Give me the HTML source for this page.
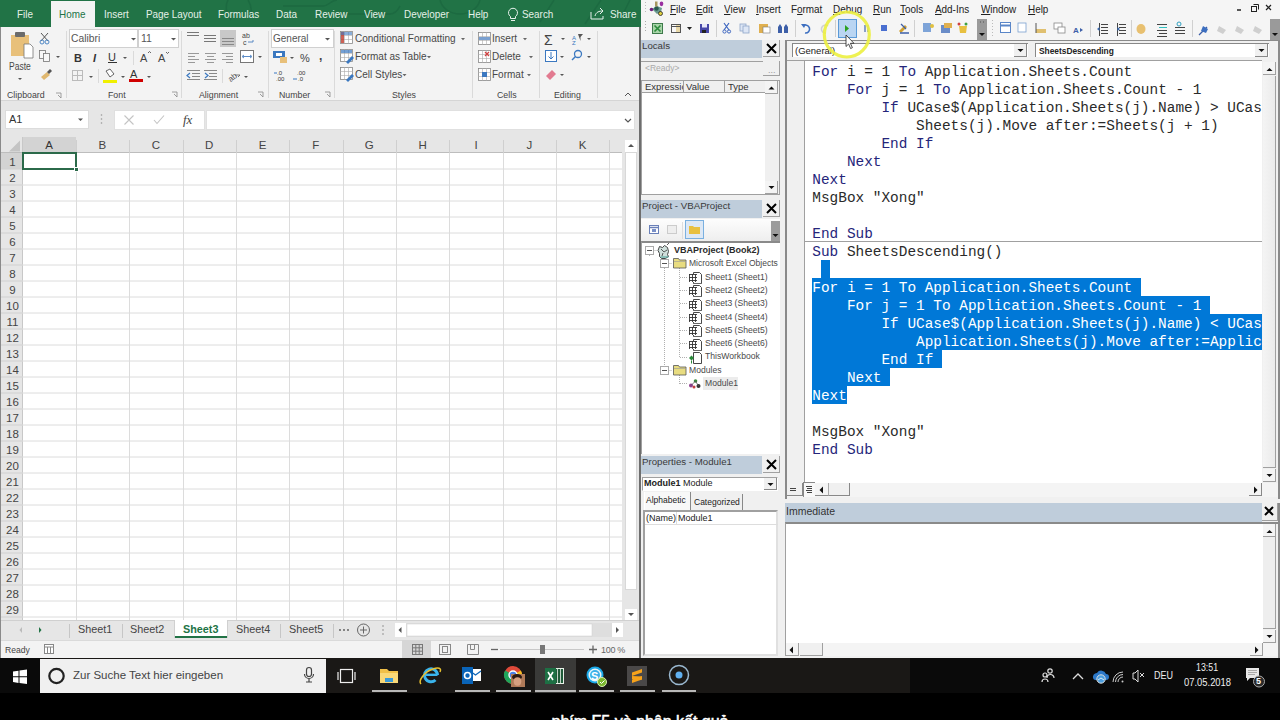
<!DOCTYPE html>
<html><head><meta charset="utf-8">
<style>
*{margin:0;padding:0;box-sizing:border-box}
body{width:1280px;height:720px;overflow:hidden;background:#000;position:relative;font-family:"Liberation Sans",sans-serif;color:#222}
.a{position:absolute}
.t{position:absolute;white-space:nowrap;line-height:1}
/* excel */
#xl{left:0;top:0;width:641px;height:658px;background:#e6e6e6}
.tab{position:absolute;top:8px;font-size:11.5px;color:#e4f1e8;white-space:nowrap;line-height:12px;transform:scaleX(0.86);transform-origin:0 0}
.rl{position:absolute;top:89.5px;font-size:8.8px;color:#444;white-space:nowrap;line-height:10px}
.rsep{position:absolute;top:31px;width:1px;height:67px;background:#dadada}
.rt{position:absolute;font-size:10px;color:#484848;white-space:nowrap;line-height:11px}
.ch{position:absolute;top:137px;height:16px;font-size:11px;color:#444;text-align:center;line-height:16px;border-right:1px solid #c8c8c8}
.rh{position:absolute;left:0;width:22px;height:16px;font-size:11px;color:#444;text-align:center;line-height:16px;border-bottom:1px solid #d8d8d8}
/* vba */
#vb{left:641px;top:0;width:639px;height:658px;background:#f0f0f0}
.mn{position:absolute;top:3px;font-size:11px;color:#222;white-space:nowrap;line-height:12px;transform:scaleX(0.9);transform-origin:0 0}
.mn u{text-decoration:underline;text-underline-offset:1px}
.tb{position:absolute;left:641px;width:121px;height:18px;background:#bfcddb;font-size:9.7px;color:#3a3a3a;line-height:12.5px;padding-left:1px;white-space:nowrap}
.xb{position:absolute;left:763px;width:17px;height:17px;background:#f0f0f0;border-right:1px solid #a0a0a0;border-bottom:1px solid #a0a0a0}
.code{position:absolute;left:812.3px;font-family:"Liberation Mono",monospace;font-size:14.41px;line-height:18px;white-space:pre;color:#2a2a2a}
.k{color:#25257a}
.sel{background:#0078d7;color:#fff}
.tr{position:absolute;font-size:9.5px;color:#4a4a4a;white-space:nowrap;line-height:10px}
</style></head><body>

<!-- ================= EXCEL ================= -->
<div id="xl" class="a">
  <div class="a" style="left:0;top:0;width:641px;height:27px;background:#217346"></div>
  <div class="a" style="left:51px;top:1px;width:44px;height:27px;background:#f3f3f3"></div>
  <div class="a" style="left:0;top:27px;width:641px;height:74px;background:#f3f3f3;border-bottom:1px solid #d5d5d5"></div>

  <!-- ribbon icons: clipboard -->
  <svg class="a" style="left:0;top:27px" width="641" height="74" viewBox="0 27 641 74">
    <!-- paste -->
    <rect x="11" y="35" width="18" height="21" fill="#e8c07a"/>
    <rect x="15" y="32" width="10" height="5" rx="1" fill="#6b6b6b"/>
    <path d="M24 44h6l3 3v11h-9z" fill="#fff" stroke="#777" stroke-width="0.8"/>
    <!-- cut -->
    <path d="M41 33l7 8M48 33l-7 8" stroke="#555" stroke-width="1"/>
    <circle cx="42" cy="42" r="2" fill="none" stroke="#4f88c6" stroke-width="1"/>
    <circle cx="47" cy="42" r="2" fill="none" stroke="#4f88c6" stroke-width="1"/>
    <!-- copy -->
    <rect x="39.5" y="50.5" width="6" height="8" fill="#f8f8f8" stroke="#777" stroke-width="0.8"/>
    <rect x="43.5" y="53.5" width="6" height="8" fill="#f8f8f8" stroke="#777" stroke-width="0.8"/>
    <path d="M56 56h4l-2 2z" fill="#555"/>
    <!-- format painter -->
    <path d="M41 77l6-5 3 3-6 5z" fill="#e0b870"/>
    <path d="M47 72l3-3 2 2-3 3z" fill="#555"/>
    <path d="M18 78h4l-2 2z" fill="#555"/>
    <path d="M56 93h5v5" fill="none" stroke="#888" stroke-width="0.8"/><path d="M58 95l3 3" stroke="#888" stroke-width="0.8"/>
    <!-- font boxes -->
    <rect x="69.5" y="29.5" width="68" height="18" fill="#fff" stroke="#d0d0d0"/>
    <rect x="138.5" y="29.5" width="40" height="18" fill="#fff" stroke="#d0d0d0"/>
    <path d="M131 38h5l-2.5 2.5z" fill="#555"/>
    <path d="M171 38h5l-2.5 2.5z" fill="#555"/>
    <text x="71" y="42" font-size="10.3" fill="#555" font-family="Liberation Sans">Calibri</text>
    <text x="141" y="42" font-size="10.5" fill="#555" font-family="Liberation Sans">11</text>
    <text x="74" y="62" font-size="11" font-weight="bold" fill="#333" font-family="Liberation Sans">B</text>
    <text x="93" y="62" font-size="11" font-style="italic" font-weight="bold" fill="#333" font-family="Liberation Sans">I</text>
    <text x="108" y="61" font-size="11" fill="#333" font-family="Liberation Sans">U</text>
    <rect x="108" y="62" width="9" height="1" fill="#333"/>
    <path d="M123 57h4l-2 2z" fill="#555"/>
    <rect x="133" y="51" width="1" height="14" fill="#dadada"/>
    <text x="140" y="62" font-size="11" fill="#444" font-family="Liberation Sans">A</text>
    <path d="M148 53l1.5 -1.5 1.5 1.5" fill="none" stroke="#444" stroke-width="0.8"/>
    <text x="158" y="62" font-size="11" fill="#444" font-family="Liberation Sans">A</text>
    <path d="M166 52l1.5 1.5 1.5 -1.5" fill="none" stroke="#444" stroke-width="0.8"/>
    <!-- borders -->
    <rect x="72.5" y="70.5" width="10" height="10" fill="none" stroke="#bbb"/>
    <path d="M77.5 70v11M72 75.5h11" stroke="#bbb"/>
    <path d="M89 76h4l-2 2z" fill="#555"/>
    <rect x="98" y="69" width="1" height="14" fill="#dadada"/>
    <!-- fill color -->
    <path d="M106 71l4 -2 4 5 -4 3z" fill="#fff" stroke="#555" stroke-width="0.9"/>
    <rect x="103" y="80" width="14" height="3" fill="#f0f000"/>
    <path d="M121 76h4l-2 2z" fill="#555"/>
    <text x="130" y="78" font-size="11" fill="#333" font-family="Liberation Sans">A</text>
    <rect x="129" y="79" width="14" height="3" fill="#d00000"/>
    <path d="M147 76h4l-2 2z" fill="#555"/>
    <path d="M172 92h5v5" fill="none" stroke="#888" stroke-width="0.8"/><path d="M174 94l3 3" stroke="#888" stroke-width="0.8"/>
    <!-- alignment -->
    <path d="M187 32.5h12M187 35.5h12" stroke="#777" stroke-width="1"/>
    <path d="M204 35.5h12M204 38.5h12M204 41.5h12" stroke="#777" stroke-width="1"/>
    <rect x="220" y="30" width="16" height="17" fill="#c8c8c8"/>
    <path d="M222 38.5h12M222 41.5h12M222 44.5h12" stroke="#888" stroke-width="1"/>
    <text x="242" y="38" font-size="7" fill="#444" font-family="Liberation Sans">ab</text>
    <text x="243" y="45" font-size="7" fill="#444" font-family="Liberation Sans">c</text>
    <path d="M248 42h5v-2" fill="none" stroke="#4a7fc0" stroke-width="0.9"/>
    <path d="M188 53.5h11M188 56.5h7M188 59.5h11M188 62.5h7" stroke="#999" stroke-width="1"/>
    <path d="M205 53.5h11M207 56.5h7M205 59.5h11M207 62.5h7" stroke="#999" stroke-width="1"/>
    <path d="M222 53.5h11M226 56.5h7M222 59.5h11M226 62.5h7" stroke="#999" stroke-width="1"/>
    <rect x="240.5" y="50.5" width="13" height="12" fill="#fff" stroke="#777"/>
    <path d="M243 56.5h8M244 55l-2 1.5 2 1.5M250 55l2 1.5-2 1.5" fill="none" stroke="#4a7fc0" stroke-width="0.9"/>
    <path d="M258 56h4l-2 2z" fill="#555"/>
    <path d="M187 70.5h13M192 73.5h8M192 76.5h8M187 79.5h13" stroke="#888" stroke-width="1"/>
    <path d="M190 73l-3 2.5 3 2.5" fill="none" stroke="#3b78c0" stroke-width="1.2"/>
    <path d="M204 70.5h13M209 73.5h8M209 76.5h8M204 79.5h13" stroke="#888" stroke-width="1"/>
    <path d="M205 73l3 2.5-3 2.5" fill="none" stroke="#3b78c0" stroke-width="1.2"/>
    <rect x="222" y="69" width="1" height="14" fill="#dadada"/>
    <text x="227" y="80" font-size="8" fill="#555" font-family="Liberation Sans" transform="rotate(-40 232 76)">ab</text>
    <path d="M235 75h5l-2 2" fill="none" stroke="#555" stroke-width="0.8"/>
    <path d="M244 76h4l-2 2z" fill="#555"/>
    <path d="M258 92h5v5" fill="none" stroke="#888" stroke-width="0.8"/><path d="M260 94l3 3" stroke="#888" stroke-width="0.8"/>
    <!-- number -->
    <rect x="271.5" y="29.5" width="62" height="18" fill="#fff" stroke="#d0d0d0"/>
    <text x="273" y="42" font-size="10" fill="#555" font-family="Liberation Sans">General</text>
    <path d="M325 38h5l-2.5 2.5z" fill="#555"/>
    <rect x="273" y="51" width="12" height="7" fill="#3b78c0"/>
    <rect x="276" y="53" width="6" height="3" fill="#fff"/>
    <rect x="280" y="57" width="7" height="6" fill="#e8c07a"/>
    <path d="M290 57h4l-2 2z" fill="#555"/>
    <text x="300" y="62" font-size="11" fill="#444" font-family="Liberation Sans">%</text>
    <text x="319" y="60" font-size="12" font-weight="bold" fill="#444" font-family="Liberation Sans">,</text>
    <text x="277" y="75" font-size="6" fill="#333" font-family="Liberation Sans">.0</text>
    <text x="276" y="81" font-size="6" fill="#333" font-family="Liberation Sans">.00</text>
    <path d="M274 73h3" stroke="#3b78c0" stroke-width="1"/>
    <text x="297" y="75" font-size="6" fill="#333" font-family="Liberation Sans">.00</text>
    <text x="298" y="81" font-size="6" fill="#333" font-family="Liberation Sans">.0</text>
    <path d="M293 79h4" stroke="#3b78c0" stroke-width="1"/>
    <path d="M325 92h5v5" fill="none" stroke="#888" stroke-width="0.8"/><path d="M327 94l3 3" stroke="#888" stroke-width="0.8"/>
    <!-- styles icons -->
    <g stroke="#888" stroke-width="0.8" fill="#fff">
      <rect x="340.5" y="31.5" width="12" height="12"/><rect x="340.5" y="49.5" width="12" height="12"/><rect x="340.5" y="67.5" width="12" height="12"/>
      <rect x="478.5" y="32.5" width="12" height="12"/><rect x="478.5" y="50.5" width="12" height="12"/><rect x="478.5" y="68.5" width="12" height="12"/>
    </g>
    <g stroke="#aaa" stroke-width="0.6">
      <path d="M340 35.5h13M340 39.5h13M344.5 31v13M348.5 31v13"/>
      <path d="M340 53.5h13M340 57.5h13M344.5 49v13M348.5 49v13"/>
      <path d="M340 71.5h13M340 75.5h13M344.5 67v13M348.5 67v13"/>
      <path d="M478 36.5h13M478 40.5h13M482.5 32v13M486.5 32v13"/>
      <path d="M478 54.5h13M478 58.5h13M482.5 50v13M486.5 50v13"/>
      <path d="M478 72.5h13M478 76.5h13M482.5 68v13M486.5 68v13"/>
    </g>
    <rect x="341" y="32" width="3" height="11" fill="#c0392b" opacity="0.8"/><rect x="341" y="32" width="11" height="3" fill="#3b78c0" opacity="0.6"/>
    <rect x="341" y="50" width="11" height="3" fill="#3b78c0" opacity="0.7"/><path d="M346 62l6-6 2 2-6 6z" fill="#3b78c0"/>
    <path d="M346 80l6-6 2 2-6 6z" fill="#3b78c0"/>
    <rect x="479" y="37" width="11" height="3" fill="#7aa0d0"/>
    <path d="M485 52l4 4M489 52l-4 4" stroke="#d04040" stroke-width="1.3"/>
    <rect x="482" y="72" width="5" height="5" fill="#3b78c0"/>
    <g fill="#666">
      <path d="M461 38h4l-2 2.2z"/><path d="M427 56h4l-2 2.2z"/><path d="M402.5 74h4l-2 2.2z"/>
      <path d="M523 38h4l-2 2.2z"/><path d="M529 56h4l-2 2.2z"/><path d="M527 74h4l-2 2.2z"/>
    </g>
    <!-- editing -->
    <text x="544" y="45" font-size="14" fill="#444" font-family="Liberation Sans">Σ</text>
    <path d="M561 38h4l-2 2z" fill="#555"/>
    <text x="572" y="40" font-size="6" fill="#3b78c0" font-family="Liberation Sans">A</text>
    <text x="572" y="45" font-size="6" fill="#3b78c0" font-family="Liberation Sans">Z</text>
    <path d="M578 34h5l-2.5 3v4z" fill="#555"/>
    <path d="M587 38h4l-2 2z" fill="#555"/>
    <rect x="545.5" y="50.5" width="11" height="11" fill="#fff" stroke="#3b78c0"/>
    <path d="M551 52v7M548.5 56.5l2.5 2.5 2.5-2.5" fill="none" stroke="#3b78c0" stroke-width="1"/>
    <path d="M560 56h4l-2 2z" fill="#555"/>
    <circle cx="578" cy="54" r="3.5" fill="none" stroke="#3b78c0" stroke-width="1.3"/>
    <path d="M575.5 56.5l-3.5 3.5" stroke="#3b78c0" stroke-width="1.5"/>
    <path d="M587 56h4l-2 2z" fill="#555"/>
    <path d="M546 76l6-6 4 4-6 6z" fill="#e27a90"/>
    <path d="M560 74h4l-2 2z" fill="#555"/>
    <path d="M625 96l3-3 3 3" fill="none" stroke="#555" stroke-width="1"/>
  </svg>
  <div class="rsep" style="left:66px"></div>
  <div class="rsep" style="left:181px"></div>
  <div class="rsep" style="left:268px"></div>
  <div class="rsep" style="left:334px"></div>
  <div class="rsep" style="left:472px"></div>
  <div class="rsep" style="left:539px"></div>
  <div class="rsep" style="left:597px"></div>
  <div class="rt" style="left:9px;top:61px;font-size:10px;transform:scaleX(0.85);transform-origin:0 0">Paste</div>
  <div class="rl" style="left:7px">Clipboard</div>
  <div class="rl" style="left:108px">Font</div>
  <div class="rl" style="left:199px">Alignment</div>
  <div class="rl" style="left:279px">Number</div>
  <div class="rl" style="left:392px">Styles</div>
  <div class="rl" style="left:497px">Cells</div>
  <div class="rl" style="left:554px">Editing</div>
  <div class="rt" style="left:355px;top:33px">Conditional Formatting</div>
  <div class="rt" style="left:355px;top:51px">Format as Table</div>
  <div class="rt" style="left:355px;top:69px">Cell Styles</div>
  <div class="rt" style="left:492px;top:33px">Insert</div>
  <div class="rt" style="left:492px;top:51px">Delete</div>
  <div class="rt" style="left:492px;top:69px">Format</div>
<svg class="a" style="left:0;top:0" width="641" height="27" viewBox="0 0 641 27"><g fill="none" stroke="#1c6840" stroke-width="1.5" opacity="0.8">
      <path d="M228 0c-3 6-2 14 3 20M248 0c4 6 4 12 2 18"/>
      <path d="M283 6h40c6 0 8-6 14-6M330 14h60c5 0 8-4 10-8"/>
      <path d="M440 0c2 8 10 14 20 14s18-6 20-14"/>
      <path d="M540 22l14-22M585 24l16-24M620 20l10-20"/>
    </g>
    
    <path d="M510.5 18.5v-2a4.5 4.5 0 1 1 5 0v2z" fill="none" stroke="#e8f2ec" stroke-width="1"/><path d="M511 20.5h4" stroke="#e8f2ec" stroke-width="1"/>
    <path d="M591 12v7h12v-3" fill="none" stroke="#e8f2ec" stroke-width="1"/><path d="M595 16c1-4 4-5 8-5M600 8l3 3-3 3" fill="none" stroke="#e8f2ec" stroke-width="1"/>
    </svg>
  <div class="tab" style="left:17px">File</div>
  <div class="tab" style="left:59px;color:#217346">Home</div>
  <div class="tab" style="left:104px">Insert</div>
  <div class="tab" style="left:146px">Page Layout</div>
  <div class="tab" style="left:218px">Formulas</div>
  <div class="tab" style="left:276px">Data</div>
  <div class="tab" style="left:315px">Review</div>
  <div class="tab" style="left:364px">View</div>
  <div class="tab" style="left:404px">Developer</div>
  <div class="tab" style="left:468px">Help</div>
  <div class="tab" style="left:522px">Search</div>
  <div class="tab" style="left:610px">Share</div>

  <!-- formula bar -->
  <div class="a" style="left:5px;top:110px;width:84px;height:19px;background:#fff;border:1px solid #dcdcdc"></div>
  <div class="rt" style="left:9px;top:114px;font-size:11px;color:#333">A1</div>
  <svg class="a" style="left:0;top:101px" width="641" height="36" viewBox="0 101 641 36">
    <path d="M78 118.5h5l-2.5 2.5z" fill="#555"/>
    <circle cx="101.5" cy="115" r="0.8" fill="#999"/><circle cx="101.5" cy="119" r="0.8" fill="#999"/><circle cx="101.5" cy="123" r="0.8" fill="#999"/>
    <rect x="114.5" y="110.5" width="90" height="19" fill="#fff" stroke="#e0e0e0"/>
    <path d="M124.5 115.5l9 9M133.5 115.5l-9 9" stroke="#c4c4c4" stroke-width="1.1"/>
    <path d="M154 120l3 3.5 7-8" fill="none" stroke="#c4c4c4" stroke-width="1.1"/>
    <rect x="206.5" y="110.5" width="428" height="19" fill="#fff" stroke="#e0e0e0"/>
    <path d="M625 119l3 3 3-3" fill="none" stroke="#555" stroke-width="1.2"/>
    
  </svg>
  <div class="t" style="left:183px;top:113px;font-size:13px;font-style:italic;font-family:'Liberation Serif',serif;color:#444">fx</div>
  <!-- grid -->
  <div class="a" style="left:22px;top:153px;width:600px;height:467px;background:#fff"></div>
  <div class="a" style="left:22px;top:137px;width:54px;height:16px;background:#d3d3d3"></div>
  <div class="a" style="left:0;top:153px;width:22px;height:16px;background:#d3d3d3"></div>
  <div class="a" style="left:0;top:152px;width:622px;height:1px;background:#bdbdbd"></div>
  <div class="a" style="left:22px;top:137px;width:1px;height:483px;background:#c8c8c8"></div>

<svg class="a" style="left:0;top:137px" width="623" height="483" viewBox="0 137 623 483">
<path d="M76.5 153V620" stroke="#dcdcdc"/>
<path d="M76.5 140V153" stroke="#cfcfcf"/>
<path d="M129.5 153V620" stroke="#dcdcdc"/>
<path d="M129.5 140V153" stroke="#cfcfcf"/>
<path d="M183.5 153V620" stroke="#dcdcdc"/>
<path d="M183.5 140V153" stroke="#cfcfcf"/>
<path d="M236.5 153V620" stroke="#dcdcdc"/>
<path d="M236.5 140V153" stroke="#cfcfcf"/>
<path d="M289.5 153V620" stroke="#dcdcdc"/>
<path d="M289.5 140V153" stroke="#cfcfcf"/>
<path d="M343.5 153V620" stroke="#dcdcdc"/>
<path d="M343.5 140V153" stroke="#cfcfcf"/>
<path d="M396.5 153V620" stroke="#dcdcdc"/>
<path d="M396.5 140V153" stroke="#cfcfcf"/>
<path d="M449.5 153V620" stroke="#dcdcdc"/>
<path d="M449.5 140V153" stroke="#cfcfcf"/>
<path d="M503.5 153V620" stroke="#dcdcdc"/>
<path d="M503.5 140V153" stroke="#cfcfcf"/>
<path d="M556.5 153V620" stroke="#dcdcdc"/>
<path d="M556.5 140V153" stroke="#cfcfcf"/>
<path d="M609.5 153V620" stroke="#dcdcdc"/>
<path d="M609.5 140V153" stroke="#cfcfcf"/>
<path d="M22 169.0H622" stroke="#dcdcdc"/>
<path d="M0 169.0H22" stroke="#d0d0d0"/>
<path d="M22 185.0H622" stroke="#dcdcdc"/>
<path d="M0 185.0H22" stroke="#d0d0d0"/>
<path d="M22 201.0H622" stroke="#dcdcdc"/>
<path d="M0 201.0H22" stroke="#d0d0d0"/>
<path d="M22 217.0H622" stroke="#dcdcdc"/>
<path d="M0 217.0H22" stroke="#d0d0d0"/>
<path d="M22 233.0H622" stroke="#dcdcdc"/>
<path d="M0 233.0H22" stroke="#d0d0d0"/>
<path d="M22 249.0H622" stroke="#dcdcdc"/>
<path d="M0 249.0H22" stroke="#d0d0d0"/>
<path d="M22 265.0H622" stroke="#dcdcdc"/>
<path d="M0 265.0H22" stroke="#d0d0d0"/>
<path d="M22 281.0H622" stroke="#dcdcdc"/>
<path d="M0 281.0H22" stroke="#d0d0d0"/>
<path d="M22 297.0H622" stroke="#dcdcdc"/>
<path d="M0 297.0H22" stroke="#d0d0d0"/>
<path d="M22 313.0H622" stroke="#dcdcdc"/>
<path d="M0 313.0H22" stroke="#d0d0d0"/>
<path d="M22 329.0H622" stroke="#dcdcdc"/>
<path d="M0 329.0H22" stroke="#d0d0d0"/>
<path d="M22 345.0H622" stroke="#dcdcdc"/>
<path d="M0 345.0H22" stroke="#d0d0d0"/>
<path d="M22 361.0H622" stroke="#dcdcdc"/>
<path d="M0 361.0H22" stroke="#d0d0d0"/>
<path d="M22 377.0H622" stroke="#dcdcdc"/>
<path d="M0 377.0H22" stroke="#d0d0d0"/>
<path d="M22 393.0H622" stroke="#dcdcdc"/>
<path d="M0 393.0H22" stroke="#d0d0d0"/>
<path d="M22 409.0H622" stroke="#dcdcdc"/>
<path d="M0 409.0H22" stroke="#d0d0d0"/>
<path d="M22 425.0H622" stroke="#dcdcdc"/>
<path d="M0 425.0H22" stroke="#d0d0d0"/>
<path d="M22 441.0H622" stroke="#dcdcdc"/>
<path d="M0 441.0H22" stroke="#d0d0d0"/>
<path d="M22 457.0H622" stroke="#dcdcdc"/>
<path d="M0 457.0H22" stroke="#d0d0d0"/>
<path d="M22 473.0H622" stroke="#dcdcdc"/>
<path d="M0 473.0H22" stroke="#d0d0d0"/>
<path d="M22 489.0H622" stroke="#dcdcdc"/>
<path d="M0 489.0H22" stroke="#d0d0d0"/>
<path d="M22 505.0H622" stroke="#dcdcdc"/>
<path d="M0 505.0H22" stroke="#d0d0d0"/>
<path d="M22 521.0H622" stroke="#dcdcdc"/>
<path d="M0 521.0H22" stroke="#d0d0d0"/>
<path d="M22 537.0H622" stroke="#dcdcdc"/>
<path d="M0 537.0H22" stroke="#d0d0d0"/>
<path d="M22 553.0H622" stroke="#dcdcdc"/>
<path d="M0 553.0H22" stroke="#d0d0d0"/>
<path d="M22 569.0H622" stroke="#dcdcdc"/>
<path d="M0 569.0H22" stroke="#d0d0d0"/>
<path d="M22 585.0H622" stroke="#dcdcdc"/>
<path d="M0 585.0H22" stroke="#d0d0d0"/>
<path d="M22 601.0H622" stroke="#dcdcdc"/>
<path d="M0 601.0H22" stroke="#d0d0d0"/>
<path d="M22 617.0H622" stroke="#dcdcdc"/>
<path d="M0 617.0H22" stroke="#d0d0d0"/>
</svg>
<div class="t" style="left:22.5px;top:140px;width:53.3px;text-align:center;font-size:11.5px;color:#333">A</div>
<div class="t" style="left:75.8px;top:140px;width:53.3px;text-align:center;font-size:11.5px;color:#444">B</div>
<div class="t" style="left:129.2px;top:140px;width:53.4px;text-align:center;font-size:11.5px;color:#444">C</div>
<div class="t" style="left:182.6px;top:140px;width:53.3px;text-align:center;font-size:11.5px;color:#444">D</div>
<div class="t" style="left:235.9px;top:140px;width:53.3px;text-align:center;font-size:11.5px;color:#444">E</div>
<div class="t" style="left:289.2px;top:140px;width:53.4px;text-align:center;font-size:11.5px;color:#444">F</div>
<div class="t" style="left:342.6px;top:140px;width:53.3px;text-align:center;font-size:11.5px;color:#444">G</div>
<div class="t" style="left:395.9px;top:140px;width:53.4px;text-align:center;font-size:11.5px;color:#444">H</div>
<div class="t" style="left:449.3px;top:140px;width:53.4px;text-align:center;font-size:11.5px;color:#444">I</div>
<div class="t" style="left:502.7px;top:140px;width:53.3px;text-align:center;font-size:11.5px;color:#444">J</div>
<div class="t" style="left:556.0px;top:140px;width:53.4px;text-align:center;font-size:11.5px;color:#444">K</div>
<div class="t" style="left:0;top:156.5px;width:25px;text-align:center;font-size:11.5px;color:#444">1</div>
<div class="t" style="left:0;top:172.5px;width:25px;text-align:center;font-size:11.5px;color:#444">2</div>
<div class="t" style="left:0;top:188.5px;width:25px;text-align:center;font-size:11.5px;color:#444">3</div>
<div class="t" style="left:0;top:204.5px;width:25px;text-align:center;font-size:11.5px;color:#444">4</div>
<div class="t" style="left:0;top:220.5px;width:25px;text-align:center;font-size:11.5px;color:#444">5</div>
<div class="t" style="left:0;top:236.5px;width:25px;text-align:center;font-size:11.5px;color:#444">6</div>
<div class="t" style="left:0;top:252.5px;width:25px;text-align:center;font-size:11.5px;color:#444">7</div>
<div class="t" style="left:0;top:268.5px;width:25px;text-align:center;font-size:11.5px;color:#444">8</div>
<div class="t" style="left:0;top:284.5px;width:25px;text-align:center;font-size:11.5px;color:#444">9</div>
<div class="t" style="left:0;top:300.5px;width:25px;text-align:center;font-size:11.5px;color:#444">10</div>
<div class="t" style="left:0;top:316.5px;width:25px;text-align:center;font-size:11.5px;color:#444">11</div>
<div class="t" style="left:0;top:332.5px;width:25px;text-align:center;font-size:11.5px;color:#444">12</div>
<div class="t" style="left:0;top:348.5px;width:25px;text-align:center;font-size:11.5px;color:#444">13</div>
<div class="t" style="left:0;top:364.5px;width:25px;text-align:center;font-size:11.5px;color:#444">14</div>
<div class="t" style="left:0;top:380.5px;width:25px;text-align:center;font-size:11.5px;color:#444">15</div>
<div class="t" style="left:0;top:396.5px;width:25px;text-align:center;font-size:11.5px;color:#444">16</div>
<div class="t" style="left:0;top:412.5px;width:25px;text-align:center;font-size:11.5px;color:#444">17</div>
<div class="t" style="left:0;top:428.5px;width:25px;text-align:center;font-size:11.5px;color:#444">18</div>
<div class="t" style="left:0;top:444.5px;width:25px;text-align:center;font-size:11.5px;color:#444">19</div>
<div class="t" style="left:0;top:460.5px;width:25px;text-align:center;font-size:11.5px;color:#444">20</div>
<div class="t" style="left:0;top:476.5px;width:25px;text-align:center;font-size:11.5px;color:#444">21</div>
<div class="t" style="left:0;top:492.5px;width:25px;text-align:center;font-size:11.5px;color:#444">22</div>
<div class="t" style="left:0;top:508.5px;width:25px;text-align:center;font-size:11.5px;color:#444">23</div>
<div class="t" style="left:0;top:524.5px;width:25px;text-align:center;font-size:11.5px;color:#444">24</div>
<div class="t" style="left:0;top:540.5px;width:25px;text-align:center;font-size:11.5px;color:#444">25</div>
<div class="t" style="left:0;top:556.5px;width:25px;text-align:center;font-size:11.5px;color:#444">26</div>
<div class="t" style="left:0;top:572.5px;width:25px;text-align:center;font-size:11.5px;color:#444">27</div>
<div class="t" style="left:0;top:588.5px;width:25px;text-align:center;font-size:11.5px;color:#444">28</div>
<div class="t" style="left:0;top:604.5px;width:25px;text-align:center;font-size:11.5px;color:#444">29</div>

  <div class="a" style="left:22px;top:152px;width:55px;height:18px;border:2px solid #2b6a4a"></div>
  <div class="a" style="left:74px;top:167px;width:5px;height:5px;background:#2b6a4a;border:1px solid #fff"></div>
  <!-- v scrollbar -->
  <div class="a" style="left:623px;top:137px;width:16px;height:483px;background:#e6e6e6"></div>
  <div class="a" style="left:625px;top:140px;width:12px;height:12px;background:#fff"></div>
  <div class="a" style="left:625px;top:152px;width:12px;height:438px;background:#fff;border:1px solid #d8d8d8"></div>
  <div class="a" style="left:625px;top:609px;width:12px;height:11px;background:#fff"></div>
  <svg class="a" style="left:623px;top:137px" width="16" height="483" viewBox="623 137 16 483">
    <path d="M628 147l3-3 3 3z" fill="#555"/><path d="M628 613l3 3 3-3z" fill="#555"/>
  </svg>
  <!-- sheet tabs -->
  <div class="a" style="left:0;top:620px;width:639px;height:20px;background:#e6e6e6;border-top:1px solid #d0d0d0"></div>
  <div class="a" style="left:175px;top:620px;width:52px;height:18px;background:#fff;border-bottom:2px solid #217346"></div>
  <svg class="a" style="left:0;top:620px" width="641" height="20" viewBox="0 620 641 20">
    <path d="M22 627v6l-2.5-3z" fill="#bbb"/><path d="M39 627v6l2.5-3z" fill="#217346"/>
    <path d="M69.5 624v14M122.5 624v14M280.5 624v14M333.5 624v14" stroke="#c6c6c6"/><path d="M174.5 620v18M227.5 620v18" stroke="#d0d0d0"/>
    <circle cx="348" cy="630" r="0.9" fill="#555"/><circle cx="344" cy="630" r="0.9" fill="#555"/><circle cx="340" cy="630" r="0.9" fill="#555"/>
    <circle cx="363.5" cy="630" r="6" fill="none" stroke="#666" stroke-width="1"/>
    <path d="M363.5 626.5v7M360 630h7" stroke="#666" stroke-width="1"/>
    <circle cx="383" cy="626" r="0.8" fill="#888"/><circle cx="383" cy="630" r="0.8" fill="#888"/><circle cx="383" cy="634" r="0.8" fill="#888"/>
    <rect x="395" y="623" width="228" height="14" fill="#dedede"/>
    <rect x="395" y="623" width="11" height="14" fill="#fff"/>
    <rect x="407" y="624" width="185" height="12" fill="#fff" stroke="#cfcfcf" stroke-width="0.5"/>
    <rect x="612" y="623" width="11" height="14" fill="#fff"/>
    <path d="M401.5 627v6l-3-3z" fill="#555"/><path d="M616 627v6l3-3z" fill="#555"/>
  </svg>
  <div class="rt" style="left:78px;top:624px;font-size:10.8px;color:#444">Sheet1</div>
  <div class="rt" style="left:130px;top:624px;font-size:10.8px;color:#444">Sheet2</div>
  <div class="rt" style="left:183px;top:624px;font-size:10.8px;color:#217346;font-weight:bold">Sheet3</div>
  <div class="rt" style="left:236px;top:624px;font-size:10.8px;color:#444">Sheet4</div>
  <div class="rt" style="left:289px;top:624px;font-size:10.8px;color:#444">Sheet5</div>
  <!-- status bar -->
  <div class="a" style="left:0;top:640px;width:639px;height:18px;background:#f3f3f3;border-top:1px solid #dadada"></div>
  <div class="rt" style="left:5px;top:645px;font-size:8.6px;color:#444">Ready</div>
  <div class="a" style="left:402px;top:640px;width:29px;height:18px;background:#d6d6d6"></div>
  <svg class="a" style="left:0;top:640px" width="641" height="18" viewBox="0 640 641 18">
    <rect x="44.5" y="644.5" width="9" height="9" fill="#fff" stroke="#888"/><path d="M44 647h10M47.5 647v7M50.5 647v7" stroke="#888"/>
    <rect x="412.5" y="644.5" width="10" height="10" fill="none" stroke="#777"/><path d="M412 647.8h11M412 651.2h11M415.8 644v11M419.2 644v11" stroke="#777"/>
    <rect x="439.5" y="644.5" width="11" height="10" fill="none" stroke="#888"/><rect x="442.5" y="646.5" width="5" height="6" fill="none" stroke="#888"/>
    <path d="M467.5 654.5v-10h11v10zM470.5 644.5v5h4v-5" fill="none" stroke="#888"/>
    <path d="M491 649.5h7" stroke="#666" stroke-width="1.3"/>
    <path d="M500 649.5h84" stroke="#c8c8c8"/>
    <rect x="540" y="645" width="5" height="9" fill="#777"/>
    <path d="M589 649.5h8M593 645.5v8" stroke="#666" stroke-width="1.3"/>
  </svg>
  <div class="rt" style="left:601px;top:645px;font-size:9px;color:#666;letter-spacing:-0.3px">100 %</div>
  <svg class="a" style="left:0;top:137px" width="22" height="16" viewBox="0 137 22 16"><path d="M9 151.5h11v-11z" fill="#c4c4c4"/></svg>
  <div class="a" style="left:639px;top:27px;width:2px;height:631px;background:#6e6e6e"></div>
  <div class="a" style="left:0;top:27px;width:1px;height:631px;background:#8a8a8a"></div>

</div>

<!-- ================= VBA ================= -->
<div id="vb" class="a"></div>
<!-- menu -->
<svg class="a" style="left:641px;top:0" width="639" height="40" viewBox="641 0 639 40">
  <rect x="641" y="0" width="639" height="40" fill="#f5f5f5"/>
  <!-- vba icon -->
  <path d="M645.5 2v12" stroke="#bbb" stroke-dasharray="1 2"/>
  <path d="M652 9l5-3 5 2-1 4-4 2z" fill="#6a9a90"/><circle cx="656.5" cy="8.5" r="2.2" fill="#2a5a50"/>
  <rect x="655" y="1.5" width="2.5" height="5" fill="#a89860"/>
  <ellipse cx="661.5" cy="3.8" rx="1.8" ry="2.4" fill="#9a30a0"/><circle cx="651.5" cy="9.5" r="1.8" fill="#702080"/>
  <circle cx="660.5" cy="13.5" r="2" fill="#e0d040" stroke="#222" stroke-width="0.8"/>
  <!-- toolbar grip -->
  <path d="M645.5 21v12" stroke="#aaa" stroke-dasharray="1 2"/>
  <!-- excel icon -->
  <rect x="652.5" y="23.5" width="10" height="10" fill="#a8d4a8" stroke="#3d7a4a"/>
  <path d="M654.5 25.5l6 6M660.5 25.5l-6 6" stroke="#2a8a3a" stroke-width="1.6"/>
  <!-- userform -->
  <rect x="671.5" y="24.5" width="9" height="8" fill="#e8d8a8" stroke="#555"/><rect x="672" y="25" width="4" height="7" fill="#f8f8f8"/><path d="M671 26.5h10" stroke="#555"/>
  <path d="M687 27h5l-2.5 3z" fill="#222"/>
  <!-- save -->
  <rect x="700" y="24" width="9" height="9" fill="#4848a8"/><rect x="702" y="24" width="5" height="3.5" fill="#e8e8f8"/><rect x="702" y="30" width="4" height="3" fill="#222"/>
  <path d="M716.5 20v17" stroke="#d0d0d0"/>
  <!-- cut -->
  <path d="M724 23l5 7M729 23l-5 7" stroke="#3d66c0" stroke-width="1.2"/><circle cx="724.5" cy="31.5" r="1.6" fill="none" stroke="#3d66c0"/><circle cx="729" cy="31.5" r="1.6" fill="none" stroke="#3d66c0"/>
  <!-- copy -->
  <rect x="740" y="24" width="6" height="7" fill="#dde6f5" stroke="#8fa5c8" stroke-width="0.8"/><rect x="743" y="26" width="6" height="7" fill="#dde6f5" stroke="#8fa5c8" stroke-width="0.8"/>
  <!-- paste -->
  <rect x="759" y="24" width="9" height="9" fill="#e0b050"/><rect x="763" y="27" width="7" height="6" fill="#fff" stroke="#777" stroke-width="0.6"/>
  <!-- find -->
  <path d="M778 33v-6l2-3 2 3v6zM784 33v-6l2-3 2 3v6z" fill="#3d5fa8"/>
  <path d="M795.5 20v17" stroke="#d0d0d0"/>
  <!-- undo -->
  <path d="M803 26a4 4 0 1 1 2 7" fill="none" stroke="#3d6fc0" stroke-width="1.6"/><path d="M801 24l3 4 2-4z" fill="#3d6fc0"/>
  <path d="M828 26a4 4 0 1 0 -2 7" fill="none" stroke="#d0d0d0" stroke-width="1.6"/>
  <path d="M835.5 20v17" stroke="#d0d0d0"/>
  <!-- run -->
  <rect x="838.5" y="19.5" width="18" height="18" fill="#b9d5f2" stroke="#5a9ad8"/>
  <path d="M845 25v7l4-3.5z" fill="#2aa020"/>
  <path d="M864 25h2v7h-2zM867 25h2v7h-2z" fill="#8aa0c8"/>
  <rect x="881" y="25" width="6" height="6" fill="#4a6fd0"/>
  <path d="M899 31l6-6 2 2-6 6z" fill="#d0a030"/><path d="M900 33h9" stroke="#3d5fa8" stroke-width="1.5"/><path d="M901 24l5 5" stroke="#3d5fa8" stroke-width="1.2"/>
  <path d="M914.5 20v17" stroke="#d0d0d0"/>
  <rect x="923" y="23" width="8" height="9" fill="#7ea4d8"/><circle cx="932" cy="26" r="2" fill="#e0c040"/>
  <rect x="941" y="25" width="9" height="8" fill="#6a8cc8"/><rect x="944" y="23" width="8" height="5" fill="#e0b050"/>
  <path d="M959 26h8l-1 7h-6z" fill="#e8c040"/><circle cx="959" cy="24" r="1.5" fill="#d04040"/><circle cx="966" cy="24" r="1.5" fill="#40a040"/>
  <rect x="977" y="19" width="10" height="21" fill="#9a9a9a"/><path d="M979 33h6l-3 3z" fill="#111"/><path d="M980 22h1M983 22h1" stroke="#555"/>
  <path d="M992.5 20v17" stroke="#bbb" stroke-dasharray="1 2"/>
  <rect x="1000.5" y="22.5" width="10" height="10" fill="#fff" stroke="#5a86c8"/><path d="M1000 25.5h11" stroke="#5a86c8" stroke-width="2"/>
  <rect x="1018" y="23" width="8" height="9" fill="#fff" stroke="#7aa0d0" stroke-width="0.8"/>
  <rect x="1036" y="29" width="10" height="4" fill="#e0c070"/><path d="M1036 23v10" stroke="#555"/>
  <rect x="1054" y="23" width="8" height="6" fill="#fff" stroke="#888" stroke-width="0.8"/><rect x="1058" y="27" width="7" height="6" fill="#fff" stroke="#888" stroke-width="0.8"/>
  <text x="1073" y="33" font-size="8" fill="#3d5fa8" font-family="Liberation Sans" font-weight="bold">A</text><path d="M1080 28l3 2-3 2z" fill="#3d5fa8"/>
  <path d="M1090.5 20v17" stroke="#d0d0d0"/>
  <path d="M1101 24.5h7M1101 27.5h7M1101 30.5h7M1101 33.5h7M1099.5 23v13" stroke="#444" stroke-width="1"/><path d="M1097 29l2.5-2v4z" fill="#3a6ab0"/>
  <path d="M1119 24.5h7M1119 27.5h7M1119 30.5h7M1119 33.5h7M1117.5 23v13" stroke="#444" stroke-width="1"/><path d="M1120 29l-2.5-2v4z" fill="#3a6ab0"/>
  <path d="M1131.5 20v17" stroke="#d0d0d0"/>
  <ellipse cx="1141" cy="29" rx="4.5" ry="5" fill="#e8c070"/>
  <path d="M1157 24.5h10M1159 27.5h8M1157 30.5h10M1159 33.5h8M1157 36.5h10" stroke="#444" stroke-width="1"/><path d="M1159 27.5h8" stroke="#30c0c0"/>
  <path d="M1175 27.5h10M1175 30.5h10M1175 33.5h10" stroke="#444"/><circle cx="1179" cy="24" r="2" fill="none" stroke="#30a0c0"/>
  <path d="M1192.5 20v17" stroke="#d0d0d0"/>
  <path d="M1199 35l8-8" stroke="#3d5fa8" stroke-width="1.2"/><path d="M1203 26l5 3-2 4-5-2z" fill="#3d6fc0"/>
  <g fill="#cfcfcf"><path d="M1219 26l7 4-3 4-6-3z"/><path d="M1237 26l7 4-3 4-6-3z"/><path d="M1255 26l7 4-3 4-6-3z"/></g>
  <rect x="1270" y="19" width="10" height="21" fill="#9a9a9a"/><path d="M1272 33h6l-3 3z" fill="#111"/>
  <!-- window controls -->
  <path d="M1237 10h4" stroke="#222" stroke-width="1.5"/>
  <rect x="1251.5" y="6.5" width="5" height="5" fill="none" stroke="#222"/><path d="M1253.5 4.5h5v5" fill="none" stroke="#222"/>
  <path d="M1266 5l5 5M1271 5l-5 5" stroke="#222" stroke-width="1.2"/>
</svg>
<div class="mn" style="left:670px"><u>F</u>ile</div>
<div class="mn" style="left:696px"><u>E</u>dit</div>
<div class="mn" style="left:724px"><u>V</u>iew</div>
<div class="mn" style="left:756px"><u>I</u>nsert</div>
<div class="mn" style="left:791px">F<u>o</u>rmat</div>
<div class="mn" style="left:833px"><u>D</u>ebug</div>
<div class="mn" style="left:873px"><u>R</u>un</div>
<div class="mn" style="left:900px"><u>T</u>ools</div>
<div class="mn" style="left:935px"><u>A</u>dd-Ins</div>
<div class="mn" style="left:981px"><u>W</u>indow</div>
<div class="mn" style="left:1028px"><u>H</u>elp</div>

<!-- locals -->
<div class="tb" style="top:40px">Locals</div>
<div class="xb" style="top:40px"></div>
<div class="a" style="left:641px;top:61px;width:122px;height:15px;background:#f0f0f0;border-top:1px solid #a0a0a0"></div>
<div class="t" style="left:645px;top:64px;font-size:8.5px;color:#aaa">&lt;Ready&gt;</div>
<div class="a" style="left:763px;top:61px;width:17px;height:15px;background:#f0f0f0;border-right:1px solid #a0a0a0;border-bottom:1px solid #a0a0a0"></div>
<div class="t" style="left:768px;top:66px;font-size:9px;color:#999">...</div>
<div class="a" style="left:641px;top:80px;width:139px;height:115px;background:#fff;border:1px solid #a0a0a0;border-right-color:#a0a0a0"></div>
<div class="a" style="left:642px;top:81px;width:123px;height:12px;background:#f0f0f0;border-bottom:1px solid #a0a0a0"></div>
<div class="a" style="left:683px;top:81px;width:1px;height:12px;background:#a0a0a0"></div>
<div class="a" style="left:724px;top:81px;width:1px;height:12px;background:#a0a0a0"></div>
<div class="t" style="left:645px;top:82px;font-size:9.5px;color:#333;width:38px;overflow:hidden">Expression</div>
<div class="t" style="left:686px;top:82px;font-size:9.5px;color:#333">Value</div>
<div class="t" style="left:728px;top:82px;font-size:9.5px;color:#333">Type</div>
<div class="a" style="left:765px;top:81px;width:14px;height:113px;background:#f0f0f0"></div>
<div class="a" style="left:765px;top:81px;width:13px;height:13px;background:#f4f4f4;border-right:1px solid #a0a0a0;border-bottom:1px solid #a0a0a0"></div>
<div class="a" style="left:765px;top:181px;width:13px;height:13px;background:#f4f4f4;border-right:1px solid #a0a0a0;border-bottom:1px solid #a0a0a0"></div>
<svg class="a" style="left:765px;top:81px" width="14" height="114" viewBox="765 81 14 114"><path d="M768.5 89.5h6l-3-3z" fill="#111"/><path d="M768.5 186h6l-3 3z" fill="#111"/></svg>

<!-- project -->
<div class="tb" style="top:200px">Project - VBAProject</div>
<div class="xb" style="top:200px"></div>
<div class="a" style="left:641px;top:219px;width:139px;height:22px;background:linear-gradient(#fdfdfd,#eeeeee)"></div>
<svg class="a" style="left:641px;top:219px" width="139" height="23" viewBox="641 219 139 23">
  <rect x="649.5" y="225.5" width="9" height="8" fill="#fff" stroke="#6a80b8"/><path d="M649 227.5h10" stroke="#6a80b8" stroke-width="1.5"/><rect x="652" y="229" width="4" height="3" fill="#7a90c8"/>
  <rect x="667.5" y="225.5" width="9" height="8" fill="#eee" stroke="#ccc"/>
  <path d="M682.5 222v17" stroke="#ddd"/>
  <rect x="685.5" y="220.5" width="18" height="18" fill="#dde8f5" stroke="#7ab0e0"/>
  <path d="M689 226h4l1 1h6v7h-11z" fill="#e8c040"/>
  <rect x="771" y="221" width="9" height="20" fill="#9c9c9c"/><path d="M772.5 234h6l-3 3z" fill="#111"/>
</svg>
<div class="a" style="left:641px;top:241px;width:139px;height:213px;background:#fff;border-top:2px solid #8a8a8a;border-left:1px solid #a0a0a0"></div>
<svg class="a" style="left:641px;top:243px" width="139" height="212" viewBox="641 243 139 212">
  <g stroke="#b0b0b0" stroke-dasharray="1 1" fill="none">
    <path d="M649.5 255v2M664.5 255v4M664.5 268v98M653.5 250.5h4M668.5 263.5h4M668.5 370.5h4"/>
    <path d="M679.5 268v90M680 277.5h8M680 290.5h8M680 303.5h8M680 317.5h8M680 330.5h8M680 343.5h8M680 357.5h8M679.5 375v9M680 383.5h8"/>
  </g>
  <rect x="645.5" y="246.5" width="8" height="8" fill="#fff" stroke="#aaa"/><path d="M647 250.5h5" stroke="#555"/>
  <rect x="660.5" y="259.5" width="8" height="8" fill="#fff" stroke="#aaa"/><path d="M662 263.5h5" stroke="#555"/>
  <rect x="660.5" y="366.5" width="8" height="8" fill="#fff" stroke="#aaa"/><path d="M662 370.5h5" stroke="#555"/>
  <path d="M659.5 246.5l3 1 2-2 3 2 1 4-1 3 1 2-3 2h-4l-2-2 0-3-1.5-3z" fill="#cfe0dc" stroke="#333" stroke-width="0.9"/>
  <path d="M661 249l3 3 3-2M663 253l-1 3" fill="none" stroke="#333" stroke-width="0.8"/><path d="M667 245l2-2" stroke="#333" stroke-width="0.8"/>
  <path d="M660.5 257h8" stroke="#5aa8a0" stroke-width="1.2"/>
  <path d="M673.5 258.5h5l1 1.5h6.5v8h-12.5z" fill="#e8dc80" stroke="#555" stroke-width="0.8"/><path d="M674 261.5h12" stroke="#999" stroke-width="0.6"/>
  <path d="M673.5 365.5h5l1 1.5h6.5v8h-12.5z" fill="#e8dc80" stroke="#555" stroke-width="0.8"/><path d="M674 368.5h12" stroke="#999" stroke-width="0.6"/>
  <path d="M693.5 272.5h6l2 2v9h-8z" fill="#fff" stroke="#333" stroke-width="0.9"/><rect x="689" y="274" width="8" height="8" fill="#fff"/><path d="M689 274.5h8M689 277.5h8M689 280.5h8M689.5 274v8M692.5 274v8M695.5 274v8" stroke="#333" stroke-width="0.9"/><path d="M694 283.5h7.5" stroke="#666"/>
<path d="M693.5 285.5h6l2 2v9h-8z" fill="#fff" stroke="#333" stroke-width="0.9"/><rect x="689" y="287" width="8" height="8" fill="#fff"/><path d="M689 287.5h8M689 290.5h8M689 293.5h8M689.5 287v8M692.5 287v8M695.5 287v8" stroke="#333" stroke-width="0.9"/><path d="M694 296.5h7.5" stroke="#666"/>
<path d="M693.5 299.5h6l2 2v9h-8z" fill="#fff" stroke="#333" stroke-width="0.9"/><rect x="689" y="301" width="8" height="8" fill="#fff"/><path d="M689 301.5h8M689 304.5h8M689 307.5h8M689.5 301v8M692.5 301v8M695.5 301v8" stroke="#333" stroke-width="0.9"/><path d="M694 310.5h7.5" stroke="#666"/>
<path d="M693.5 312.5h6l2 2v9h-8z" fill="#fff" stroke="#333" stroke-width="0.9"/><rect x="689" y="314" width="8" height="8" fill="#fff"/><path d="M689 314.5h8M689 317.5h8M689 320.5h8M689.5 314v8M692.5 314v8M695.5 314v8" stroke="#333" stroke-width="0.9"/><path d="M694 323.5h7.5" stroke="#666"/>
<path d="M693.5 325.5h6l2 2v9h-8z" fill="#fff" stroke="#333" stroke-width="0.9"/><rect x="689" y="327" width="8" height="8" fill="#fff"/><path d="M689 327.5h8M689 330.5h8M689 333.5h8M689.5 327v8M692.5 327v8M695.5 327v8" stroke="#333" stroke-width="0.9"/><path d="M694 336.5h7.5" stroke="#666"/>
<path d="M693.5 339.5h6l2 2v9h-8z" fill="#fff" stroke="#333" stroke-width="0.9"/><rect x="689" y="341" width="8" height="8" fill="#fff"/><path d="M689 341.5h8M689 344.5h8M689 347.5h8M689.5 341v8M692.5 341v8M695.5 341v8" stroke="#333" stroke-width="0.9"/><path d="M694 350.5h7.5" stroke="#666"/>

  <path d="M693.5 352.5h6l2 2v9h-8z" fill="#fff" stroke="#333" stroke-width="0.9"/>
  <path d="M689 358l2.5-2.5 2.5 2.5-2.5 2.5z" fill="#2a8a3a"/><path d="M691.5 360.5v3" stroke="#2a8a3a"/>
  <circle cx="691" cy="385.5" r="2" fill="#904090"/><circle cx="695.5" cy="381" r="1.8" fill="#3a8a3a"/><circle cx="698.5" cy="386" r="2" fill="#333"/><circle cx="694" cy="387" r="1.5" fill="#c04040"/>
  <path d="M691 385.5l4.5-4.5 3 5" stroke="#555" fill="none" stroke-width="0.8"/>
  <rect x="703" y="377" width="35" height="13" fill="#ececec"/>
</svg>
<div class="tr" style="left:674px;top:245px;font-weight:bold;color:#2a2a2a;font-size:9px">VBAProject (Book2)</div>
<div class="tr" style="left:689px;top:258px;font-size:8.5px">Microsoft Excel Objects</div>
<div class="tr" style="left:705px;top:272px;font-size:8.6px">Sheet1 (Sheet1)</div>
<div class="tr" style="left:705px;top:285px;font-size:8.6px">Sheet2 (Sheet2)</div>
<div class="tr" style="left:705px;top:298px;font-size:8.6px">Sheet3 (Sheet3)</div>
<div class="tr" style="left:705px;top:312px;font-size:8.6px">Sheet4 (Sheet4)</div>
<div class="tr" style="left:705px;top:325px;font-size:8.6px">Sheet5 (Sheet5)</div>
<div class="tr" style="left:705px;top:338px;font-size:8.6px">Sheet6 (Sheet6)</div>
<div class="tr" style="left:705px;top:351px;font-size:8.6px">ThisWorkbook</div>
<div class="tr" style="left:689px;top:365px;font-size:8.6px">Modules</div>
<div class="tr" style="left:705px;top:378px;font-size:8.6px">Module1</div>

<!-- properties -->
<div class="tb" style="top:456px">Properties - Module1</div>
<div class="xb" style="top:456px"></div>
<div class="a" style="left:642px;top:477px;width:136px;height:14px;background:#fff;border:1px solid #a0a0a0;border-right-color:#fff;border-bottom-color:#fff"></div>
<div class="t" style="left:644px;top:479px;font-size:9px;color:#222"><b>Module1</b> Module</div>
<div class="a" style="left:764px;top:478px;width:13px;height:12px;background:#f0f0f0;border-right:1px solid #888;border-bottom:1px solid #888"></div>
<svg class="a" style="left:764px;top:478px" width="14" height="13" viewBox="764 478 14 13"><path d="M767.5 483h6l-3 3z" fill="#111"/></svg>
<div class="a" style="left:644px;top:492px;width:47px;height:18px;background:#f8f8f8;border-left:1px solid #fff;border-right:1px solid #888"></div>
<div class="a" style="left:692px;top:494px;width:51px;height:16px;background:#f0f0f0;border-right:1px solid #888"></div>
<div class="t" style="left:646px;top:496px;font-size:8.5px;color:#222">Alphabetic</div>
<div class="t" style="left:694px;top:498px;font-size:8.5px;color:#222">Categorized</div>
<div class="a" style="left:643px;top:510px;width:135px;height:146px;background:#fff;border:2px solid #a0a0a0;border-right-color:#e0e0e0;border-bottom-color:#e0e0e0"></div>
<div class="a" style="left:645px;top:524px;width:133px;height:1px;background:#ddd"></div>
<div class="a" style="left:676px;top:512px;width:1px;height:13px;background:#ddd"></div>
<div class="t" style="left:646px;top:514px;font-size:9px;color:#222">(Name)</div>
<div class="t" style="left:678px;top:514px;font-size:9px;color:#222">Module1</div>

<!-- code pane frame -->
<div class="a" style="left:785px;top:40px;width:495px;height:459px;background:#f0f0f0;border-left:2px solid #8a8a8a;border-top:1px solid #8a8a8a;border-right:2px solid #8a8a8a"></div>
<div class="a" style="left:792px;top:43px;width:236px;height:14px;background:#fff;border-left:1px solid #888;border-top:1px solid #888"></div>
<div class="t" style="left:795px;top:45.5px;font-size:9.5px;color:#222">(General)</div>
<div class="a" style="left:1014px;top:44px;width:13px;height:13px;background:#f0f0f0;border-right:1px solid #888;border-bottom:1px solid #888"></div>
<div class="a" style="left:1035px;top:43px;width:234px;height:14px;background:#fff;border-left:1px solid #888;border-top:1px solid #888"></div>
<div class="t" style="left:1039px;top:45.5px;font-size:9.5px;color:#222;font-weight:bold;transform:scaleX(0.88);transform-origin:0 0">SheetsDescending</div>
<div class="a" style="left:1255px;top:44px;width:13px;height:13px;background:#f0f0f0;border-right:1px solid #888;border-bottom:1px solid #888"></div>
<svg class="a" style="left:1010px;top:44px" width="260" height="15" viewBox="1010 44 260 15"><path d="M1017.5 49h6l-3 3z" fill="#111"/><path d="M1258.5 49h6l-3 3z" fill="#111"/></svg>
<div class="a" style="left:787px;top:60px;width:18px;height:423px;background:#f0f0f0;border-right:1px solid #a0a0a0;border-top:1px solid #a0a0a0"></div>
<div class="a" style="left:805px;top:60px;width:457px;height:423px;background:#fff;border-top:1px solid #a0a0a0;overflow:hidden"></div>
<div class="a" style="left:805px;top:241px;width:457px;height:1px;background:#a0a0a0"></div>
<!-- v scrollbar -->
<div class="a" style="left:1262px;top:62px;width:16px;height:421px;background:#f0f0f0"></div>
<div class="a" style="left:1263px;top:62px;width:13px;height:13px;background:#f4f4f4;border-right:1px solid #a0a0a0;border-bottom:1px solid #a0a0a0"></div>
<div class="a" style="left:1263px;top:76px;width:13px;height:392px;background:linear-gradient(90deg,#f4f4f4,#ebebeb);border-right:1px solid #a0a0a0;border-bottom:1px solid #a0a0a0"></div>
<div class="a" style="left:1263px;top:469px;width:13px;height:13px;background:#f4f4f4;border-right:1px solid #a0a0a0;border-bottom:1px solid #a0a0a0"></div>
<svg class="a" style="left:1262px;top:62px" width="16" height="421" viewBox="1262 62 16 421"><path d="M1266.5 71h6l-3-3z" fill="#111"/><path d="M1266.5 474h6l-3 3z" fill="#111"/></svg>
<!-- h scrollbar -->
<div class="a" style="left:787px;top:483px;width:491px;height:14px;background:#f4f4f4"></div>
<div class="a" style="left:787px;top:483px;width:16px;height:13px;background:#f0f0f0;border-right:1px solid #888;border-bottom:1px solid #888"></div>
<div class="a" style="left:803px;top:482px;width:12px;height:15px;background:#f8f8f8;border-top:1px solid #888;border-left:1px solid #888"></div>
<div class="a" style="left:815px;top:483px;width:13px;height:13px;background:#f4f4f4;border-bottom:1px solid #888"></div>
<div class="a" style="left:828px;top:483px;width:22px;height:13px;background:#f0f0f0;border-left:1px solid #aaa;border-right:1px solid #888;border-bottom:1px solid #888"></div>
<div class="a" style="left:1249px;top:483px;width:13px;height:13px;background:#f4f4f4;border-right:1px solid #888;border-bottom:1px solid #888"></div>
<svg class="a" style="left:787px;top:483px" width="491" height="14" viewBox="787 483 491 14">
  <path d="M790 488.5h6M790 490.5h6" stroke="#444"/><path d="M806 486.5h6M807 488.5h5M806 490.5h6M807 492.5h5" stroke="#444"/>
  <path d="M823 486.5v7l-3.5-3.5z" fill="#111"/><path d="M1254 486.5v7l3.5-3.5z" fill="#111"/>
</svg>

<!-- code -->
<div class="a" style="left:805px;top:62px;width:457px;height:421px;overflow:hidden">
<div class="a" style="left:15.95px;top:198px;width:8.65px;height:18px;background:#0078d7"></div>
<div class="a" style="left:7.30px;top:216px;width:328.62px;height:18px;background:#0078d7"></div>
<div class="a" style="left:7.30px;top:234px;width:397.81px;height:18px;background:#0078d7"></div>
<div class="a" style="left:7.30px;top:252px;width:1729.60px;height:18px;background:#0078d7"></div>
<div class="a" style="left:7.30px;top:270px;width:1729.60px;height:18px;background:#0078d7"></div>
<div class="a" style="left:7.30px;top:288px;width:129.72px;height:18px;background:#0078d7"></div>
<div class="a" style="left:7.30px;top:306px;width:77.83px;height:18px;background:#0078d7"></div>
<div class="a" style="left:7.30px;top:324px;width:34.59px;height:18px;background:#0078d7"></div>
<div class="code" style="top:1px;left:7.3px"><span class="k">For</span> i = 1 <span class="k">To</span> Application.Sheets.Count</div>
<div class="code" style="top:19px;left:7.3px">    <span class="k">For</span> j = 1 <span class="k">To</span> Application.Sheets.Count - 1</div>
<div class="code" style="top:37px;left:7.3px">        <span class="k">If</span> UCase$(Application.Sheets(j).Name) &gt; UCase$(Application.Sheets(j + 1).Name) <span class="k">Then</span></div>
<div class="code" style="top:55px;left:7.3px">            Sheets(j).Move after:=Sheets(j + 1)</div>
<div class="code" style="top:73px;left:7.3px">        <span class="k">End If</span></div>
<div class="code" style="top:91px;left:7.3px">    <span class="k">Next</span></div>
<div class="code" style="top:109px;left:7.3px"><span class="k">Next</span></div>
<div class="code" style="top:127px;left:7.3px">MsgBox &quot;Xong&quot;</div>
<div class="code" style="top:163px;left:7.3px"><span class="k">End Sub</span></div>
<div class="code" style="top:181px;left:7.3px"><span class="k">Sub</span> SheetsDescending()</div>
<div class="code" style="top:217px;left:7.3px;color:#fff">For i = 1 To Application.Sheets.Count</div>
<div class="code" style="top:235px;left:7.3px;color:#fff">    For j = 1 To Application.Sheets.Count - 1</div>
<div class="code" style="top:253px;left:7.3px;color:#fff">        If UCase$(Application.Sheets(j).Name) &lt; UCase$(Application.Sheets(j + 1).Name) Then</div>
<div class="code" style="top:271px;left:7.3px;color:#fff">            Application.Sheets(j).Move after:=Application.Sheets(j + 1)</div>
<div class="code" style="top:289px;left:7.3px;color:#fff">        End If</div>
<div class="code" style="top:307px;left:7.3px;color:#fff">    Next</div>
<div class="code" style="top:325px;left:7.3px;color:#fff">Next</div>
<div class="code" style="top:361px;left:7.3px">MsgBox &quot;Xong&quot;</div>
<div class="code" style="top:379px;left:7.3px"><span class="k">End Sub</span></div>
</div>

<!-- immediate -->
<div class="a" style="left:785px;top:503px;width:477px;height:19px;background:#bfcddb"></div>
<div class="t" style="left:786px;top:506px;font-size:10.5px;color:#333">Immediate</div>
<div class="a" style="left:1262px;top:503px;width:16px;height:18px;background:#f0f0f0;border-right:1px solid #a0a0a0;border-bottom:1px solid #a0a0a0"></div>
<div class="a" style="left:785px;top:522px;width:495px;height:134px;background:#fff;border-top:2px solid #8a8a8a;border-left:1px solid #a0a0a0"></div>
<div class="a" style="left:1263px;top:524px;width:15px;height:120px;background:#f0f0f0"></div>
<div class="a" style="left:1263px;top:524px;width:13px;height:13px;background:#f4f4f4;border-right:1px solid #a0a0a0;border-bottom:1px solid #a0a0a0"></div>
<div class="a" style="left:1263px;top:630px;width:13px;height:13px;background:#f4f4f4;border-right:1px solid #a0a0a0;border-bottom:1px solid #a0a0a0"></div>
<div class="a" style="left:786px;top:643px;width:492px;height:13px;background:#f4f4f4"></div>
<div class="a" style="left:786px;top:643px;width:13px;height:13px;background:#f4f4f4;border-right:1px solid #a0a0a0;border-bottom:1px solid #a0a0a0"></div>
<div class="a" style="left:800px;top:643px;width:23px;height:13px;background:#f0f0f0;border-right:1px solid #a0a0a0;border-bottom:1px solid #a0a0a0"></div>
<div class="a" style="left:1250px;top:643px;width:13px;height:13px;background:#f4f4f4;border-right:1px solid #a0a0a0;border-bottom:1px solid #a0a0a0"></div>
<div class="a" style="left:1278px;top:503px;width:2px;height:155px;background:#8a8a8a"></div>
<div class="a" style="left:1263px;top:537px;width:13px;height:92px;background:#eeeeee;border-right:1px solid #a0a0a0;border-bottom:1px solid #a0a0a0"></div>
<svg class="a" style="left:785px;top:503px" width="495" height="155" viewBox="785 503 495 155">
  <path d="M1265 507l8 8M1273 507l-8 8" stroke="#000" stroke-width="2"/>
  <path d="M1266.5 533h6l-3-3z" fill="#111"/><path d="M1266.5 635h6l-3 3z" fill="#111"/>
  <path d="M793 646.5v7l-3.5-3.5z" fill="#111"/><path d="M1255 646.5v7l3.5-3.5z" fill="#111"/>
</svg>
<svg class="a" style="left:763px;top:40px" width="17" height="440" viewBox="763 40 17 440">
  <path d="M767 44l9 9M776 44l-9 9" stroke="#000" stroke-width="2"/>
  <path d="M767 204l9 9M776 204l-9 9" stroke="#000" stroke-width="2"/>
  <path d="M767 460l9 9M776 460l-9 9" stroke="#000" stroke-width="2"/>
</svg>


<!-- taskbar -->
<div class="a" style="left:0;top:658px;width:1280px;height:35px;background:#1a1816"></div>
<div class="a" style="left:0;top:658px;width:40px;height:35px;background:#0a0a0a"></div>
<div class="a" style="left:910px;top:658px;width:370px;height:35px;background:#0a0a0a"></div>
<div class="a" style="left:535px;top:658px;width:41px;height:35px;background:#3a3a38"></div>
<div class="a" style="left:40px;top:659px;width:286px;height:34px;background:#f0f0f0"></div>
<div class="t" style="left:73px;top:670px;font-size:11.5px;color:#444">Zur Suche Text hier eingeben</div>
<svg class="a" style="left:0;top:658px" width="1280" height="35" viewBox="0 658 1280 35">
  <!-- windows logo -->
  <path d="M13 671.5l5.5-.8v5.6H13zM19.5 670.6l7.5-1.1v6.8h-7.5zM13 677.3h5.5v5.6l-5.5-.8zM19.5 677.3H27v6.8l-7.5-1.1z" fill="#fff"/>
  <circle cx="56.5" cy="676" r="7.2" fill="none" stroke="#222" stroke-width="2.2"/>
  <rect x="306.5" y="667.5" width="5" height="9" rx="2.5" fill="none" stroke="#444" stroke-width="1.2"/>
  <path d="M304.5 674a4.5 4.5 0 0 0 9 0M309 678.5v3M306 682h6" fill="none" stroke="#444" stroke-width="1.2"/>
  <!-- task view -->
  <rect x="340.5" y="669.5" width="12" height="13" fill="none" stroke="#eee" stroke-width="1.2"/>
  <path d="M338 672v8M355 672v8" stroke="#eee" stroke-width="1.2"/>
  <!-- explorer -->
  <path d="M380 669h7l2 2h9v12h-18z" fill="#f0c048"/><rect x="380" y="673" width="18" height="10" fill="#f8d878"/><rect x="385" y="678" width="8" height="4" fill="#3a9ad8"/>
  <!-- IE -->
  <path d="M437.5 675A6.5 6.5 0 1 0 435.5 680" fill="none" stroke="#3ab4ec" stroke-width="3"/>
  <path d="M425 674.8h12.5" stroke="#3ab4ec" stroke-width="2.4"/>
  <path d="M421 684c-3-3 3-12 12-15c5-2 9-1 7 3" fill="none" stroke="#e8c030" stroke-width="1.5"/>
  <!-- outlook -->
  <rect x="470" y="669" width="11" height="12" fill="#fff"/><path d="M470 671l5.5 4 5.5-4" fill="none" stroke="#0a64b8" stroke-width="1.2"/>
  <rect x="462" y="667" width="11" height="17" fill="#0a64b8"/><circle cx="467.5" cy="675.5" r="3" fill="none" stroke="#fff" stroke-width="1.6"/>
  <!-- chrome -->
  <circle cx="513" cy="675" r="9" fill="#e04a3a"/>
  <path d="M513 675L513 684A9 9 0 0 1 505.2 670.5z" fill="#1fa55a"/>
  <path d="M513 675L520.8 670.5A9 9 0 0 1 513 684z" fill="#f4c020"/>
  <circle cx="513" cy="675" r="4" fill="#4a80e8" stroke="#fff" stroke-width="1.4"/>
  <rect x="511" y="674" width="14" height="13" fill="#b07a58"/>
  <ellipse cx="517" cy="677" rx="5" ry="3" fill="#2a1a14"/>
  <ellipse cx="517.5" cy="681.5" rx="3.8" ry="4.2" fill="#d6a080"/>
  <!-- excel -->
  <rect x="554.5" y="668.5" width="9" height="15" fill="#1e5a38" stroke="#e8f0e8" stroke-width="1"/><path d="M557.5 669v14M560.5 669v14" stroke="#e8f0e8" stroke-width="0.8"/>
  <rect x="545" y="668" width="11" height="16" fill="#1d7044"/><path d="M548 672l5 8M553 672l-5 8" stroke="#fff" stroke-width="1.6"/>
  <!-- skype -->
  <circle cx="595" cy="675" r="8.5" fill="#1aa8e8"/><circle cx="595" cy="675" r="6.5" fill="#e8f6fc"/><circle cx="595" cy="675" r="5" fill="#3ab0e8"/>
  <text x="591" y="679.5" font-size="11" font-weight="bold" font-family="Liberation Sans" fill="#fff">S</text>
  <circle cx="602" cy="682" r="4.5" fill="#7cb82f" stroke="#d8f0b0" stroke-width="1"/><path d="M600 682l1.5 1.5 3-3" stroke="#fff" fill="none" stroke-width="1"/>
  <!-- sublime -->
  <rect x="627" y="666" width="20" height="20" fill="#4a4848"/><path d="M632 672.5l10-3.5v3.5l-10 3.5zM632 679.5l10-3.5v3.5l-10 3.5z" fill="#f7a21a"/><path d="M632 676l10 0.5v3l-10-0.5z" fill="#f7a21a"/>
  <!-- circle app -->
  <circle cx="679" cy="675" r="9.5" fill="none" stroke="#9ab8d0" stroke-width="1.5"/><circle cx="679" cy="675" r="3.5" fill="#60b0f0"/>
  <!-- indicators -->
  <g fill="#b8b8b8">
    <rect x="372" y="690" width="35" height="2"/><rect x="455" y="690" width="35" height="2"/><rect x="496" y="690" width="35" height="2"/>
    <rect x="535" y="690" width="41" height="2"/><rect x="579" y="690" width="35" height="2"/><rect x="620" y="690" width="35" height="2"/><rect x="662" y="690" width="34" height="2"/>
  </g>
  <!-- tray -->
  <circle cx="1050" cy="671" r="2.2" fill="none" stroke="#ddd" stroke-width="1.2"/><circle cx="1045" cy="675" r="2" fill="none" stroke="#ddd" stroke-width="1.2"/>
  <path d="M1042 682a3 3 0 0 1 6 0M1047 678a3.5 3.5 0 0 1 7 0" fill="none" stroke="#ddd" stroke-width="1.2"/>
  <path d="M1073 679l5-5 5 5" fill="none" stroke="#ddd" stroke-width="1.3"/>
  <path d="M1093 678a4 4 0 0 1 4-5a5 5 0 0 1 9 1a3 3 0 0 1 0 6h-11a2.5 2.5 0 0 1-2-2z" fill="#2c78c8"/><circle cx="1101" cy="679" r="4.2" fill="#4a9ee0" stroke="#ddd" stroke-width="1"/><path d="M1098 680l3-2 3 2" stroke="#fff" fill="none" stroke-width="0.8"/>
  <path d="M1113 682a10 10 0 0 1 10-10M1115.5 682a7.5 7.5 0 0 1 7.5-7.5M1118 682a5 5 0 0 1 5-5" fill="none" stroke="#ccc" stroke-width="1"/><circle cx="1122.5" cy="681.5" r="1" fill="#ccc"/>
  <path d="M1133 673h2l3-3v12l-3-3h-2z" fill="none" stroke="#ddd" stroke-width="1"/><path d="M1140 673l4 4M1144 673l-4 4" stroke="#ddd" stroke-width="1"/>
  <!-- notification -->
  <path d="M1246 668h13v10h-9l-3 3v-3h-1z" fill="#e8e8e8"/><path d="M1248 670.5h9M1248 672.5h9M1248 674.5h7" stroke="#999" stroke-width="0.8"/>
  <circle cx="1259" cy="681.5" r="5.5" fill="#2a2a2a" stroke="#aaa" stroke-width="1"/>
</svg>
<div class="t" style="left:1154px;top:671px;font-size:10px;color:#eee;transform:scaleX(0.9);transform-origin:0 0">DEU</div>
<div class="t" style="left:1196px;top:663px;font-size:10px;color:#eee;transform:scaleX(0.88);transform-origin:0 0">13:51</div>
<div class="t" style="left:1184px;top:678px;font-size:10px;color:#eee;transform:scaleX(0.94);transform-origin:0 0">07.05.2018</div>
<div class="t" style="left:1256px;top:677px;font-size:9px;color:#fff;font-weight:bold">5</div>
<div class="t" style="left:0;top:714px;width:1280px;text-align:center;font-size:16px;color:#fff;-webkit-text-stroke:0.5px #fff">phím F5 và nhận kết quả</div>


<svg class="a" style="left:800px;top:0" width="100" height="80" viewBox="800 0 100 80">
  <circle cx="846.8" cy="34.5" r="22.5" fill="none" stroke="#ecf040" stroke-width="3.2" opacity="0.9"/>
  <path d="M846 35v11.5l2.6-2.5 2 4.5 1.8-0.8-2-4.4h3.6z" fill="#fff" stroke="#222" stroke-width="0.8" stroke-linejoin="round"/>
</svg>
</body></html>
